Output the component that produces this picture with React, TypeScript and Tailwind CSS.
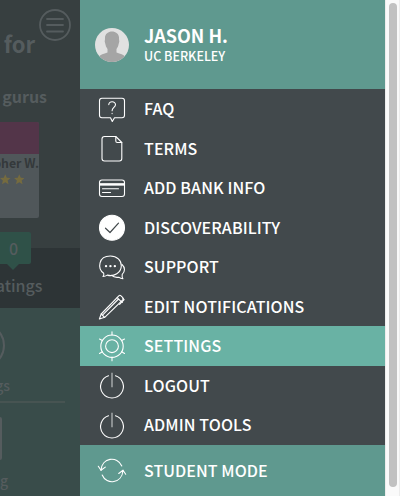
import type { ReactNode } from "react";

const stroke = { fill: "none", stroke: "#fff", strokeWidth: 1.1, strokeLinecap: "round", strokeLinejoin: "round" } as const;

function Icon({ children }: { children: ReactNode }) {
  return (
    <svg className="block size-8 shrink-0" viewBox="0 0 32 32" {...stroke}>
      {children}
    </svg>
  );
}

const Faq = () => (
  <Icon>
    <path d="M6 5.300h20q2.500 0 2.500 2.500v14.400q0 2.500-2.500 2.500h-7.500L16.300 28.500 14.500 24.700H6q-2.500 0-2.500-2.500V7.800Q3.500 5.300 6 5.300z" />
    <path d="M12.800 11.600c0-4 6.900-3.600 6.700.2-.1 2.700-3.400 2.600-3.400 5.900M16.100 20.300v.3" />
  </Icon>
);
const Terms = () => (
  <Icon>
    <path d="M8.500 4.500h11.300l6 6v16q0 2.500-2.500 2.500H8.500Q6 29 6 26.500V7q0-2.500 2.500-2.500z" />
    <path d="M19.800 4.500V9q0 1.500 1.500 1.500h4.500" />
  </Icon>
);
const Card = () => (
  <Icon>
    <rect x="3.500" y="8" width="25" height="16.500" rx="2.500" />
    <path d="M4 12.400h24" strokeWidth="2.500" strokeLinecap="butt" />
    <path d="M6.500 16.700h16M6.500 20.500h8" />
  </Icon>
);
const Check = () => (
  <Icon>
    <circle cx="16" cy="16.700" r="12.500" fill="#fff" />
    <path d="M9.500 17.200l4.500 4.300 8.500-9.300" stroke="#42494c" strokeWidth="1.200" />
  </Icon>
);
const Chat = () => (
  <Icon>
    <path d="M7.700 22.300C1.200 17.500 2.300 5 14.300 5c6.800 0 11 4.300 11 9.800 0 6.800-7.300 11.200-14 9.300-1.400.9-2.800 1.300-4.300 1.300q1.300-1.200.7-3.100z" />
    <path d="M26 13.500c3.300 3 3.200 7.300.2 9.800-.3 1.700-.1 3.200.7 4.400-1.700 0-3-.5-4.200-1.500-2.800.4-5.300-.2-7.200-1.800" />
    <path d="M10 15.200h.1M14.400 15.200h.1M18.800 15.200h.1" strokeWidth="2.300" />
  </Icon>
);
const Pencil = () => (
  <Icon>
    <path d="M3.400 29l1.800-5L22.800 5.800q1.100-1.100 2.200 0l1.800 1.800q1.100 1.100 0 2.200L8.700 27.300z" />
    <path d="M5.200 24l3.400 3.300M7 24.700L22.500 9M21.200 7.700l3.700 3.700M26.800 8.500l1.300 1.100-4.500 4.700M25.300 11.300l1.100 1" />
  </Icon>
);
const Gear = () => (
  <Icon>
    <circle cx="16" cy="16.200" r="11.200" />
    <circle cx="16" cy="16.200" r="6.400" />
    <path d="M16 5V1.800M16 27.400v3.300M6.300 10.600L3.500 9M25.700 10.600L28.500 9M6.300 21.800l-2.800 1.700M25.700 21.800l2.800 1.700" />
  </Icon>
);
const Power = () => (
  <Icon>
    <path d="M12.500 6.700a11.400 11.400 0 1 0 7 0" />
    <path d="M16 3.700v14.500" stroke="#c9cbcc" strokeLinecap="butt" />
  </Icon>
);
const Cycle = () => (
  <Icon>
    <path d="M5 16.300C5.500 3.500 21.500 1.500 25.800 12M27 16.500C26 29.500 10.500 31.500 6.200 21" />
    <path d="M2.300 12.300L5 16.300l4.300-3.200M22.700 19.500l4.300-3.300 2.700 4" />
  </Icon>
);

const items: { label: string; icon: ReactNode; active?: boolean }[] = [
  { label: "FAQ", icon: <Faq /> },
  { label: "TERMS", icon: <Terms /> },
  { label: "ADD BANK INFO", icon: <Card /> },
  { label: "DISCOVERABILITY", icon: <Check /> },
  { label: "SUPPORT", icon: <Chat /> },
  { label: "EDIT NOTIFICATIONS", icon: <Pencil /> },
  { label: "SETTINGS", icon: <Gear />, active: true },
  { label: "LOGOUT", icon: <Power /> },
  { label: "ADMIN TOOLS", icon: <Power /> },
];

function Star() {
  return (
    <svg className="size-[11px]" viewBox="0 0 24 24" fill="#756b3f">
      <path d="M12 0l3.500 8 8.500.8-6.500 5.700 2 8.500L12 18.500 4.500 23l2-8.500L0 8.800 8.500 8z" />
    </svg>
  );
}

function Backdrop() {
  return (
    <div className="flex w-20 shrink-0 flex-col overflow-hidden whitespace-nowrap leading-none text-[#555c5e]">
      <div className="h-[248px] bg-[#373f40]">
        <div className="flex h-[87px] justify-end pr-[9px]">
          <span className="mr-1 mt-8 text-[22px] font-bold">s for</span>
          <svg className="mt-[9px] size-8 shrink-0" viewBox="0 0 32 32" fill="none" stroke="#555c5e" strokeWidth="1.800" strokeLinecap="round">
            <circle cx="16" cy="16" r="15" />
            <path d="M8 10h16M8 16h16M8 22.500h16" />
          </svg>
        </div>
        <div className="flex h-[35px] justify-end pr-[33px] pt-[1px] text-[16px] font-bold">gurus</div>
        <div className="h-24 w-[39px] overflow-hidden rounded-r-[2px] bg-[#50575a]">
          <div className="h-8 bg-[#533549]" />
          <div className="flex justify-end pt-[3px] text-[12.3px] font-bold text-[#34393b]">opher W.</div>
          <div className="flex justify-end gap-[3px] pr-[15px] pt-[5px]">
            <Star />
            <Star />
          </div>
        </div>
      </div>
      <div className="relative flex h-[60px] justify-end bg-[#2d3436] pr-[37.5px] pt-[29px] text-[16px] font-medium">
        <span>ratings</span>
        <div className="absolute -top-4 left-0 flex h-8 w-[31px] items-center justify-center rounded-r-[2px] bg-[#2f5148] pr-[4px] text-[16px]">
          0
          <svg className="absolute left-[7px] top-8 h-[6px] w-3" viewBox="0 0 12 6" fill="#2f5148"><path d="M0 0h12L6 6z" /></svg>
        </div>
      </div>
      <div className="grow bg-[#394c4a]">
        <div className="h-[95px] w-[65px] border-b-2 border-[#475452]">
          <div className="h-[70px] pt-[15px]">
            <div className="-ml-10 size-[45px] rounded-full border-2 border-[#555c5e]" />
          </div>
          <div className="flex w-[10px] justify-end text-[14px] font-medium">ngs</div>
        </div>
        <div className="mt-[14px] h-[43px] w-[2px] rounded-r-[2px] bg-[#555c5e]" />
        <div className="mt-[13px] flex w-2 justify-end text-[14px] font-medium">ng</div>
      </div>
    </div>
  );
}

export default function App() {
  return (
    <div className="flex h-[496px] w-[400px] overflow-hidden font-['Noto_Sans_CJK_SC','Noto_Sans',sans-serif]">
      <Backdrop />
      <div className="flex w-[305px] shrink-0 flex-col bg-[#42494c] leading-none text-white">
        <header className="flex h-[89px] items-center bg-[#5f998f] pl-[15px]">
          <svg className="size-[34px]" viewBox="0 0 34 34">
            <clipPath id="face"><circle cx="17" cy="17" r="17" /></clipPath>
            <g clipPath="url(#face)">
              <path fill="#e1e1e1" d="M0 0h34v34H0z" />
              <path fill="#a5a5a5" d="M10 11c-1-10 15-10 14 0l.3 2.500-1.300 5-1.500 2.500v3.500c4 1.500 7 2 8.500 4V35H4v-6.500c1.500-2 4.500-2.500 8.500-4V21L11 18.500l-1.300-5z" />
            </g>
          </svg>
          <div className="ml-[15px] flex flex-col gap-1.5 pb-px">
            <span className="text-[18px] font-bold">JASON H.</span>
            <span className="text-[12.5px] font-medium">UC BERKELEY</span>
          </div>
        </header>
        <nav className="text-[16px] font-medium tracking-[0.1px]">
          {items.map(({ label, icon, active }) => (
            <div key={label} className={`flex h-[39.5px] items-center gap-4 pl-4 ${active ? "bg-[#69b2a4]" : ""}`}>
              {icon}
              <span className="pb-[0.7px]">{label}</span>
            </div>
          ))}
        </nav>
        <footer className="flex grow items-center gap-4 bg-[#5f998f] pl-4 text-[16px] font-medium tracking-[0.07px]">
          <Cycle />
          <span>STUDENT MODE</span>
        </footer>
      </div>
      <div className="flex w-[15px] justify-center border-x border-[#ececec] bg-[#fafafa] pt-[3px]">
        <div className="h-[484px] w-2 rounded-full bg-[#c1c1c1]" />
      </div>
    </div>
  );
}
